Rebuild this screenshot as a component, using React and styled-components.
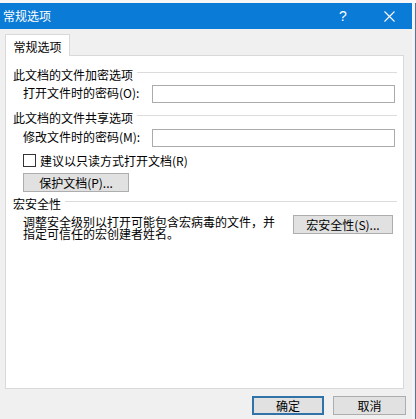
import React from 'react';
import styled, { createGlobalStyle } from 'styled-components';

const GlobalStyle = createGlobalStyle`
  html, body {
    margin: 0;
    padding: 0;
    background: #fbfbfb;
  }
  body {
    font-family: "Noto Sans CJK SC", "Liberation Sans", sans-serif;
    font-size: 12px;
    color: #000;
  }
`;

const Screen = styled.div`
  width: 416px;
  height: 419px;
  overflow: hidden;
  display: flex;
  flex-direction: column;
`;

const TopStrip = styled.div`
  height: 3px;
  background: #f7f7f7;
`;

const Row = styled.div`
  display: flex;
  flex: 1;
`;

const Dialog = styled.div`
  width: 412px;
  display: flex;
  flex-direction: column;
  background: #f0f0f0;
`;

const EdgeStrip = styled.div`
  flex: 1;
  background: #eef0f2;
  border-left: 2px solid #f4f4f4;
  box-shadow: inset -1px 0 0 #5d7590;
`;

const TitleBar = styled.div`
  height: 26px;
  background: #0a7bd6;
  color: #fff;
  display: flex;
  align-items: center;
  padding-left: 3px;
  font-size: 12px;
`;

const TitleText = styled.span`
  flex: 1;
  line-height: 14px;
`;

const TitleButton = styled.span`
  width: ${(p) => p.w}px;
  display: flex;
  justify-content: center;
  align-items: center;
  font-family: "Liberation Sans", sans-serif;
  font-size: 14px;
`;

const Body = styled.div`
  flex: 1;
  display: flex;
  flex-direction: column;
  padding: 4px 8px 0 5px;
`;

const Tabs = styled.div`
  display: flex;
  height: 22px;
`;

const Tab = styled.div`
  width: 65px;
  background: #fff;
  border: 1px solid #d9d9d9;
  border-bottom: none;
  display: flex;
  align-items: center;
  justify-content: center;
  padding-top: 1px;
  box-sizing: border-box;
  position: relative;
  top: 1px;
  z-index: 1;
`;

const Panel = styled.div`
  height: 334px;
  box-sizing: border-box;
  background: #fff;
  border: 1px solid #d9d9d9;
  padding: 10px 8px 0 7px;
  display: flex;
  flex-direction: column;
`;

const Heading = styled.div`
  display: flex;
  align-items: center;
  gap: 4px;
  height: 16px;
  margin-top: ${(p) => p.mt || 0}px;
  margin-right: -2px;
  &::after {
    content: "";
    flex: 1;
    height: 1px;
    background: #dcdcdc;
    margin-top: -3px;
  }
`;

const Field = styled.div`
  display: grid;
  grid-template-columns: 129px 1fr;
  align-items: center;
  margin: ${(p) => p.mt}px 0 0 10px;
  height: 18px;
`;

const Label = styled.span`
  line-height: 14px;
  margin-top: -3px;
`;

const Input = styled.div`
  height: 18px;
  box-sizing: border-box;
  border: 1px solid #ababab;
  background: #fff;
`;

const CheckRow = styled.label`
  display: flex;
  align-items: center;
  gap: 4px;
  height: 16px;
  margin: 5px 0 0 10px;
`;

const Box = styled.span`
  width: 13px;
  height: 13px;
  box-sizing: border-box;
  border: 1px solid #333;
  background: #fff;
`;

const Button = styled.div`
  width: ${(p) => p.w}px;
  height: 19px;
  box-sizing: border-box;
  background: #e1e1e1;
  border: 1px solid #adadad;
  display: flex;
  align-items: center;
  justify-content: center;
  line-height: 14px;
  flex-shrink: 0;
`;

const DefaultButton = styled(Button)`
  border: 2px solid #2f73a8;
`;

const ProtectWrap = styled.div`
  margin: 5px 0 0 10px;
`;

const MacroRow = styled.div`
  display: flex;
  justify-content: space-between;
  align-items: flex-start;
  margin: 4px 2px 0 10px;
`;

const Desc = styled.div`
  display: flex;
  flex-direction: column;
  padding-top: 1px;
`;

const DescLine = styled.div`
  height: 12px;
  line-height: 12px;
`;

const Footer = styled.div`
  display: flex;
  justify-content: flex-end;
  gap: 9px;
  padding-top: 7px;
  margin-right: -2px;
`;

const CloseIcon = () => (
  <svg width="11" height="11" viewBox="0 0 11 11">
    <path d="M0.5 0.5 L10.5 10.5 M10.5 0.5 L0.5 10.5" stroke="#fff" strokeWidth="1.1" fill="none" />
  </svg>
);

export default function App() {
  return (
    <Screen>
      <GlobalStyle />
      <TopStrip />
      <Row>
        <Dialog>
          <TitleBar>
            <TitleText>常规选项</TitleText>
            <TitleButton w={46}>?</TitleButton>
            <TitleButton w={46}>
              <CloseIcon />
            </TitleButton>
          </TitleBar>
          <Body>
            <Tabs>
              <Tab>常规选项</Tab>
            </Tabs>
            <Panel>
              <Heading>此文档的文件加密选项</Heading>
              <Field mt={3}>
                <Label>打开文件时的密码(O):</Label>
                <Input />
              </Field>
              <Heading mt={6}>此文档的文件共享选项</Heading>
              <Field mt={4}>
                <Label>修改文件时的密码(M):</Label>
                <Input />
              </Field>
              <CheckRow>
                <Box />
                <span>建议以只读方式打开文档(R)</span>
              </CheckRow>
              <ProtectWrap>
                <Button w={106}>保护文档(P)...</Button>
              </ProtectWrap>
              <Heading mt={3}>宏安全性</Heading>
              <MacroRow>
                <Desc>
                  <DescLine>调整安全级别以打开可能包含宏病毒的文件，并</DescLine>
                  <DescLine>指定可信任的宏创建者姓名。</DescLine>
                </Desc>
                <Button w={100}>宏安全性(S)...</Button>
              </MacroRow>
            </Panel>
            <Footer>
              <DefaultButton w={72}>确定</DefaultButton>
              <Button w={73}>取消</Button>
            </Footer>
          </Body>
        </Dialog>
        <EdgeStrip />
      </Row>
    </Screen>
  );
}
